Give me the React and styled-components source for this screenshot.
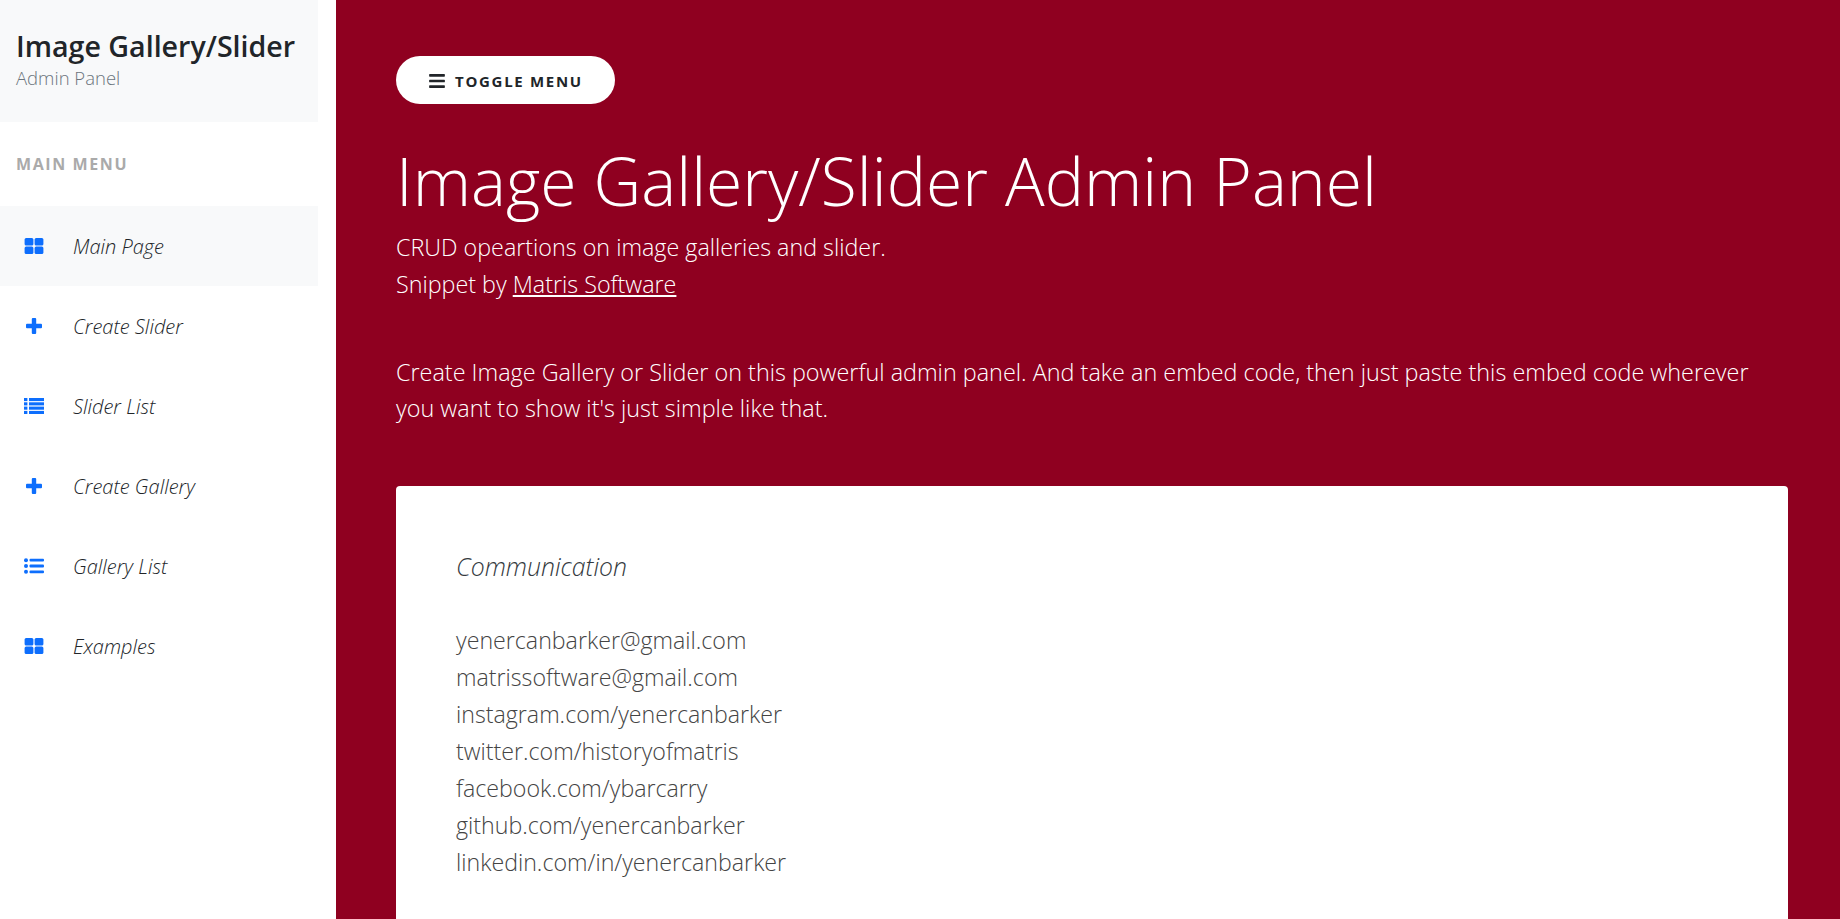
import React from 'react';
import styled, { createGlobalStyle } from 'styled-components';
import { FaBars } from 'react-icons/fa';

const GlobalStyle = createGlobalStyle`
  html, body {
    margin: 0;
    height: 100%;
    overflow: hidden;
  }
  body {
    font-family: "Open Sans", "Noto Sans", "Liberation Sans", sans-serif;
    color: #212529;
  }
  #root {
    height: 100%;
  }
`;

const Wrapper = styled.div`
  display: flex;
  height: 100%;
`;

const Sidebar = styled.nav`
  flex: 0 0 318px;
  margin-right: 18px;
  background: #fff;
`;

const SidebarHeader = styled.header`
  height: 122px;
  box-sizing: border-box;
  padding: 28px 16px 0;
  background: #f8f9fa;
`;

const Brand = styled.h3`
  margin: 0;
  font-size: 28.6px;
  line-height: 36px;
  font-weight: 600;
  white-space: nowrap;
`;

const BrandSub = styled.div`
  font-size: 18.5px;
  line-height: 28px;
  font-weight: 300;
  color: #6c757d;
`;

const MenuTitle = styled.div`
  height: 84px;
  box-sizing: border-box;
  padding: 32px 16px 0;
  font-size: 16px;
  line-height: 20px;
  font-weight: 700;
  letter-spacing: 1.6px;
  color: #aaa;
`;

const Menu = styled.ul`
  margin: 0;
  padding: 0;
  list-style: none;
`;

const MenuItem = styled.li`
  display: flex;
  align-items: center;
  height: 80px;
  padding-left: 24px;
  background: ${(p) => (p.$active ? '#f8f9fa' : 'transparent')};
  font-size: 20px;
  font-style: italic;
  font-weight: 350;
  color: #212529;

  svg {
    flex: 0 0 20px;
    width: 20px;
    height: 16px;
    fill: #0d6efd;
    margin-right: 29px;
  }
`;

const Main = styled.main`
  flex: 1;
  min-width: 0;
  box-sizing: border-box;
  padding: 56px 52px 0 60px;
  background: #8f0020;
  color: #fff;
`;

const ToggleButton = styled.button`
  display: inline-flex;
  align-items: center;
  height: 48px;
  padding: 2px 32px 0;
  border: none;
  border-radius: 24px;
  background: #fff;
  color: #212529;
  font-family: inherit;
  font-size: 15px;
  font-weight: 700;
  letter-spacing: 1.7px;
  text-transform: uppercase;

  svg {
    width: 18px;
    height: 18px;
    margin-right: 9px;
  }
`;

const Title = styled.h1`
  margin: 33px 0 0;
  font-size: 66px;
  line-height: 86px;
  font-weight: 300;
  white-space: nowrap;
`;

const Lead = styled.p`
  margin: 6px 0 0;
  font-size: 23.3px;
  line-height: 37px;
  font-weight: 300;

  a {
    color: #fff;
    text-decoration: underline;
  }
`;

const Intro = styled.p`
  margin: 51px 0 0;
  font-size: 23.4px;
  line-height: 36px;
  font-weight: 300;
`;

const Card = styled.section`
  margin-top: 60px;
  padding: 60px;
  background: #fff;
  border-radius: 4px;
  color: #343a40;
`;

const CardTitle = styled.div`
  font-size: 24.8px;
  line-height: 40px;
  font-style: italic;
  font-weight: 350;
  margin-bottom: 36px;
`;

const ContactLine = styled.div`
  font-size: 23.2px;
  line-height: 37px;
  font-weight: 300;
  color: #444;
`;

const GridIcon = () => (
  <svg viewBox="0 0 20 16">
    <rect x="0.6" y="0" width="8.8" height="7.4" rx="1.5" />
    <rect x="10.6" y="0" width="8.8" height="7.4" rx="1.5" />
    <rect x="0.6" y="8.6" width="8.8" height="7.4" rx="1.5" />
    <rect x="10.6" y="8.6" width="8.8" height="7.4" rx="1.5" />
  </svg>
);

const PlusIcon = () => (
  <svg viewBox="0 0 20 16">
    <rect x="2" y="5.8" width="16" height="4.4" rx="1" />
    <rect x="7.8" y="0" width="4.4" height="16" rx="1" />
  </svg>
);

const ListIcon = () => (
  <svg viewBox="0 0 20 16">
    {[0, 4.3, 8.6, 12.9].map((y) => (
      <g key={y}>
        <rect x="0" y={y} width="3.4" height="3.1" />
        <rect x="5" y={y} width="15" height="3.1" />
      </g>
    ))}
  </svg>
);

const BulletIcon = () => (
  <svg viewBox="0 0 20 16">
    {[2.2, 8, 13.8].map((y) => (
      <g key={y}>
        <circle cx="2" cy={y} r="2" />
        <rect x="5.5" y={y - 1.4} width="14.5" height="2.8" rx="1" />
      </g>
    ))}
  </svg>
);

const items = [
  { label: 'Main Page', Icon: GridIcon, active: true },
  { label: 'Create Slider', Icon: PlusIcon },
  { label: 'Slider List', Icon: ListIcon },
  { label: 'Create Gallery', Icon: PlusIcon },
  { label: 'Gallery List', Icon: BulletIcon },
  { label: 'Examples', Icon: GridIcon },
];

const contacts = [
  'yenercanbarker@gmail.com',
  'matrissoftware@gmail.com',
  'instagram.com/yenercanbarker',
  'twitter.com/historyofmatris',
  'facebook.com/ybarcarry',
  'github.com/yenercanbarker',
  'linkedin.com/in/yenercanbarker',
];

const App = () => (
  <Wrapper>
    <GlobalStyle />
    <Sidebar>
      <SidebarHeader>
        <Brand>Image Gallery/Slider</Brand>
        <BrandSub>Admin Panel</BrandSub>
      </SidebarHeader>
      <MenuTitle>MAIN MENU</MenuTitle>
      <Menu>
        {items.map(({ label, Icon, active }) => (
          <MenuItem key={label} $active={active}>
            <Icon />
            {label}
          </MenuItem>
        ))}
      </Menu>
    </Sidebar>
    <Main>
      <ToggleButton>
        <FaBars />
        Toggle Menu
      </ToggleButton>
      <Title>Image Gallery/Slider Admin Panel</Title>
      <Lead>
        CRUD opeartions on image galleries and slider.
        <br />
        Snippet by <a href="#matris">Matris Software</a>
      </Lead>
      <Intro>
        Create Image Gallery or Slider on this powerful admin panel. And take an embed code, then just paste this
        embed code wherever you want to show it's just simple like that.
      </Intro>
      <Card>
        <CardTitle>Communication</CardTitle>
        {contacts.map((c) => (
          <ContactLine key={c}>{c}</ContactLine>
        ))}
      </Card>
    </Main>
  </Wrapper>
);

export default App;
